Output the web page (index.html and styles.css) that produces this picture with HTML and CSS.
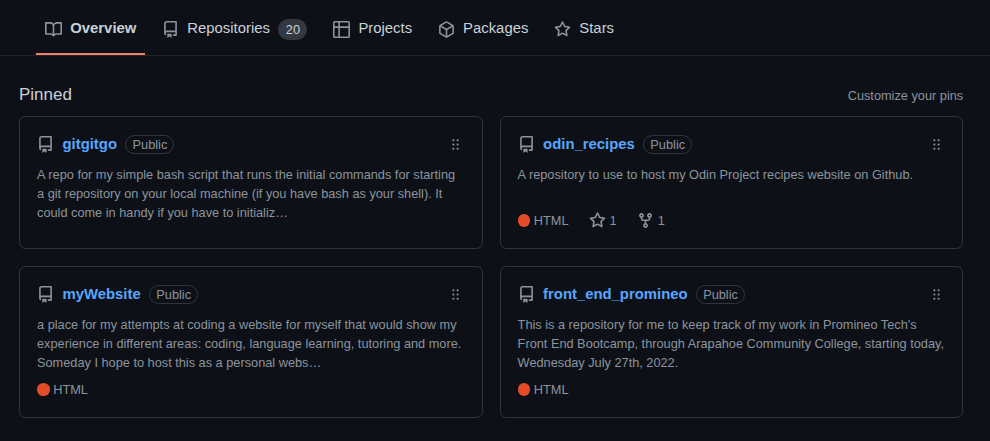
FILE: index.html
```html
<!DOCTYPE html>
<html lang="en">
<head>
<meta charset="utf-8">
<title>Overview</title>
<link rel="stylesheet" href="styles.css">
</head>
<body>
<svg class="sprite" aria-hidden="true">
  <symbol id="book" viewBox="0 0 16 16"><path fill-rule="evenodd" d="M0 1.75A.75.75 0 01.75 1h4.253c1.227 0 2.317.59 3 1.501A3.744 3.744 0 0111.006 1h4.245a.75.75 0 01.75.75v10.5a.75.75 0 01-.75.75h-4.507a2.25 2.25 0 00-1.591.659l-.622.621a.75.75 0 01-1.06 0l-.622-.621A2.25 2.25 0 005.258 13H.75a.75.75 0 01-.75-.75V1.75zm8.755 3a2.25 2.25 0 012.25-2.25H14.5v9h-3.757c-.71 0-1.4.201-1.992.572l.004-7.322zm-1.504 7.324l.004-5.073-.002-2.253A2.25 2.25 0 005.003 2.5H1.5v9h3.757a3.75 3.75 0 011.994.574z"/></symbol>
  <symbol id="repo" viewBox="0 0 16 16"><path fill-rule="evenodd" d="M2 2.5A2.5 2.5 0 014.5 0h8.75a.75.75 0 01.75.75v12.5a.75.75 0 01-.75.75h-2.5a.75.75 0 110-1.5h1.75v-2h-8a1 1 0 00-.714 1.7.75.75 0 01-1.072 1.05A2.495 2.495 0 012 11.5v-9zm10.5-1V9h-8c-.356 0-.694.074-1 .208V2.5a1 1 0 011-1h8zM5 12.25v3.25a.25.25 0 00.4.2l1.45-1.087a.25.25 0 01.3 0L8.6 15.7a.25.25 0 00.4-.2v-3.25a.25.25 0 00-.25-.25h-3.5a.25.25 0 00-.25.25z"/></symbol>
  <symbol id="table" viewBox="0 0 16 16"><path fill-rule="evenodd" d="M0 1.75C0 .784.784 0 1.75 0h12.5C15.216 0 16 .784 16 1.75v12.5A1.75 1.75 0 0114.25 16H1.75A1.75 1.75 0 010 14.25V1.75zM1.5 6.5v7.75c0 .138.112.25.25.25H5v-8H1.5zM6.5 6.5v8h7.75a.25.25 0 00.25-.25V6.5h-8zM14.5 5h-8V1.5h7.75a.25.25 0 01.25.25V5zM5 1.5V5H1.5V1.75a.25.25 0 01.25-.25H5z"/></symbol>
  <symbol id="package" viewBox="0 0 16 16"><path fill-rule="evenodd" d="M8.878.392a1.75 1.75 0 00-1.756 0l-5.25 3.045A1.75 1.75 0 001 4.951v6.098c0 .624.332 1.2.872 1.514l5.25 3.045a1.75 1.75 0 001.756 0l5.25-3.045c.54-.313.872-.89.872-1.514V4.951c0-.624-.332-1.2-.872-1.514L8.878.392zM7.875 1.69a.25.25 0 01.25 0l4.63 2.685L8 7.133 3.245 4.375l4.63-2.685zM2.5 5.677v5.372c0 .09.047.171.125.216l4.625 2.683V8.432L2.5 5.677zm6.25 8.271l4.625-2.683a.25.25 0 00.125-.216V5.677L8.75 8.432v5.516z"/></symbol>
  <symbol id="star" viewBox="0 0 16 16"><path fill-rule="evenodd" d="M8 .25a.75.75 0 01.673.418l1.882 3.815 4.21.612a.75.75 0 01.416 1.279l-3.046 2.97.719 4.192a.75.75 0 01-1.088.791L8 12.347l-3.766 1.98a.75.75 0 01-1.088-.79l.72-4.194L.818 6.374a.75.75 0 01.416-1.28l4.21-.611L7.327.668A.75.75 0 018 .25zm0 2.445L6.615 5.5a.75.75 0 01-.564.41l-3.097.45 2.24 2.184a.75.75 0 01.216.664l-.528 3.084 2.769-1.456a.75.75 0 01.698 0l2.77 1.456-.53-3.084a.75.75 0 01.216-.664l2.24-2.183-3.096-.45a.75.75 0 01-.564-.41L8 2.694v.001z"/></symbol>
  <symbol id="fork" viewBox="0 0 16 16"><path fill-rule="evenodd" d="M5 3.25a.75.75 0 11-1.5 0 .75.75 0 011.5 0zm0 2.122a2.25 2.25 0 10-1.5 0v.878A2.25 2.25 0 005.75 8.5h1.5v2.128a2.251 2.251 0 101.5 0V8.5h1.5a2.25 2.25 0 002.25-2.25v-.878a2.25 2.25 0 10-1.5 0v.878a.75.75 0 01-.75.75h-4.5A.75.75 0 015 6.25v-.878zm3.75 7.378a.75.75 0 11-1.5 0 .75.75 0 011.5 0zm3-8.75a.75.75 0 100-1.5.75.75 0 000 1.5z"/></symbol>
  <symbol id="grabber" viewBox="0 0 16 16"><path fill-rule="evenodd" d="M10 13a1 1 0 100-2 1 1 0 000 2zm-4 0a1 1 0 100-2 1 1 0 000 2zm1-5a1 1 0 11-2 0 1 1 0 012 0zm3 1a1 1 0 100-2 1 1 0 000 2zm1-5a1 1 0 11-2 0 1 1 0 012 0zM6 5a1 1 0 100-2 1 1 0 000 2z"/></symbol>
</svg>

<nav class="tabs">
  <a class="tab tab-active"><svg class="icon"><use href="#book"/></svg><span>Overview</span></a>
  <a class="tab"><svg class="icon"><use href="#repo"/></svg><span>Repositories</span><span class="counter">20</span></a>
  <a class="tab"><svg class="icon"><use href="#table"/></svg><span>Projects</span></a>
  <a class="tab"><svg class="icon"><use href="#package"/></svg><span>Packages</span></a>
  <a class="tab"><svg class="icon"><use href="#star"/></svg><span>Stars</span></a>
</nav>

<main class="pinned">
  <header class="pinned-head">
    <h2>Pinned</h2>
    <a class="customize">Customize your pins</a>
  </header>
  <div class="grid">
    <article class="card">
      <div class="card-head"><svg class="icon"><use href="#repo"/></svg><a class="name">gitgitgo</a><span class="label">Public</span><svg class="grabber"><use href="#grabber"/></svg></div>
      <p class="desc">A repo for my simple bash script that runs the initial commands for starting<br>a git repository on your local machine (if you have bash as your shell). It<br>could come in handy if you have to initializ…</p>
    </article>
    <article class="card">
      <div class="card-head"><svg class="icon"><use href="#repo"/></svg><a class="name">odin_recipes</a><span class="label">Public</span><svg class="grabber"><use href="#grabber"/></svg></div>
      <p class="desc">A repository to use to host my Odin Project recipes website on Github.</p>
      <div class="meta">
        <span class="lang"><i class="dot"></i>HTML</span>
        <span class="stat"><svg class="icon"><use href="#star"/></svg>1</span>
        <span class="stat"><svg class="icon"><use href="#fork"/></svg>1</span>
      </div>
    </article>
    <article class="card">
      <div class="card-head"><svg class="icon"><use href="#repo"/></svg><a class="name">myWebsite</a><span class="label">Public</span><svg class="grabber"><use href="#grabber"/></svg></div>
      <p class="desc">a place for my attempts at coding a website for myself that would show my<br>experience in different areas: coding, language learning, tutoring and more.<br>Someday I hope to host this as a personal webs…</p>
      <div class="meta"><span class="lang"><i class="dot"></i>HTML</span></div>
    </article>
    <article class="card">
      <div class="card-head"><svg class="icon"><use href="#repo"/></svg><a class="name">front_end_promineo</a><span class="label">Public</span><svg class="grabber"><use href="#grabber"/></svg></div>
      <p class="desc">This is a repository for me to keep track of my work in Promineo Tech's<br>Front End Bootcamp, through Arapahoe Community College, starting today,<br>Wednesday July 27th, 2022.</p>
      <div class="meta"><span class="lang"><i class="dot"></i>HTML</span></div>
    </article>
  </div>
</main>
</body>
</html>
```
FILE: styles.css
```css
* {
  box-sizing: border-box;
}

body {
  margin: 0;
  height: 441px;
  overflow: hidden;
  background: #0d1117;
  color: #c9d1d9;
  font: 14.875px/22px "Liberation Sans", Arial, sans-serif;
}

.sprite {
  display: none;
}

.icon {
  flex: none;
  width: 17px;
  height: 17px;
  fill: #8b949e;
}

.tabs {
  display: flex;
  gap: 8.6px;
  height: 56px;
  padding-left: 36.25px;
  border-bottom: 1px solid #21262d;
}

.tab {
  display: flex;
  align-items: center;
  height: 55px;
  padding: 6px 8.4px 0 8.5px;
  border-bottom: 2px solid transparent;
  white-space: nowrap;
}

.tab .icon {
  margin-right: 8.5px;
}

.tab > span {
  padding-bottom: 4px;
}

.tab-active {
  border-bottom-color: #f78166;
  font-weight: 600;
}

.tab .counter {
  min-width: 29px;
  height: 21px;
  margin-left: 8.5px;
  padding: 0 6.4px;
  border-radius: 22px;
  background: #343941;
  font-size: 12.75px;
  line-height: 21px;
  text-align: center;
}

.pinned {
  padding: 26px 26.8px 0 19px;
}

.pinned-head {
  display: flex;
  justify-content: space-between;
  align-items: center;
  height: 26px;
  margin-bottom: 8px;
}

.pinned-head h2 {
  margin: 0;
  font-size: 17px;
  font-weight: 400;
}

.customize {
  padding-top: 2px;
  color: #8b949e;
  font-size: 12.75px;
}

.grid {
  display: grid;
  grid-template-columns: repeat(2, minmax(0, 1fr));
  grid-template-rows: 133px 152px;
  gap: 17px;
}

.card {
  display: flex;
  flex-direction: column;
  padding: 17px;
  border: 1px solid #30363d;
  border-radius: 6.4px;
  color: #8b949e;
  font-size: 12.75px;
  line-height: 19px;
}

.card-head {
  display: flex;
  align-items: center;
  height: 20px;
}

.card-head .icon {
  margin-top: 1px;
}

.name {
  margin: 1px 8.5px 0;
  color: #58a6ff;
  font-size: 14.875px;
  font-weight: 600;
}

.label {
  height: 19px;
  padding: 0 6.1px;
  border: 1px solid #30363d;
  border-radius: 20px;
  line-height: 18px;
}

.grabber {
  width: 17px;
  height: 17px;
  margin: 1px 0.6px 0 auto;
  fill: #8b949e;
}

.desc {
  flex: 1;
  margin: 11px 0 0;
  white-space: nowrap;
}

.meta {
  display: flex;
  align-items: center;
  gap: 20.5px;
  height: 19px;
  margin-bottom: 1px;
}

.lang,
.stat {
  display: flex;
  align-items: center;
}

.dot {
  width: 12.75px;
  height: 12.75px;
  margin-right: 3.5px;
  border-radius: 50%;
  background: #e34c26;
}

.stat .icon {
  margin: 0 3.5px 1px 0;
}
```
